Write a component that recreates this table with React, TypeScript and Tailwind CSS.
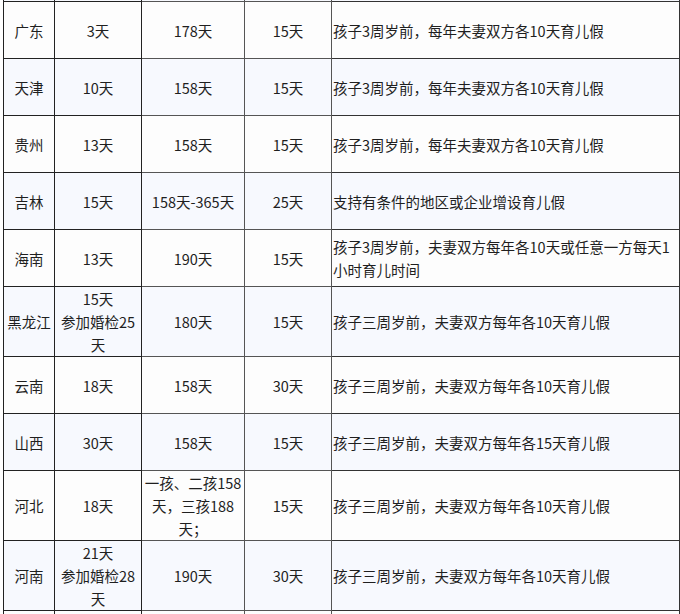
import React from "react";

type Row = { p: string; a: string[]; b: string[]; c: string; d: string[]; h?: string };

const rows: Row[] = [
  { p: "广东", a: ["3天"], b: ["178天"], c: "15天", d: ["孩子3周岁前，每年夫妻双方各10天育儿假"] },
  { p: "天津", a: ["10天"], b: ["158天"], c: "15天", d: ["孩子3周岁前，每年夫妻双方各10天育儿假"] },
  { p: "贵州", a: ["13天"], b: ["158天"], c: "15天", d: ["孩子3周岁前，每年夫妻双方各10天育儿假"] },
  { p: "吉林", a: ["15天"], b: ["158天-365天"], c: "25天", d: ["支持有条件的地区或企业增设育儿假"] },
  { p: "海南", a: ["13天"], b: ["190天"], c: "15天", d: ["孩子3周岁前，夫妻双方每年各10天或任意一方每天1", "小时育儿时间"] },
  { p: "黑龙江", a: ["15天", "参加婚检25", "天"], b: ["180天"], c: "15天", d: ["孩子三周岁前，夫妻双方每年各10天育儿假"] },
  { p: "云南", a: ["18天"], b: ["158天"], c: "30天", d: ["孩子三周岁前，夫妻双方每年各10天育儿假"] },
  { p: "山西", a: ["30天"], b: ["158天"], c: "15天", d: ["孩子三周岁前，夫妻双方每年各15天育儿假"] },
  { p: "河北", a: ["18天"], b: ["一孩、二孩158", "天，三孩188", "天；"], c: "15天", d: ["孩子三周岁前，夫妻双方每年各10天育儿假"] },
  { p: "河南", a: ["21天", "参加婚检28", "天"], b: ["190天"], c: "30天", d: ["孩子三周岁前，夫妻双方每年各10天育儿假"] },
];

const Lines = ({ l }: { l: string[] }) => (
  <>
    {l.map((t, i) => (
      <div key={i}>{t}</div>
    ))}
  </>
);

export default function App() {
  return (
    <div
      className="w-[680px] h-[614px] overflow-hidden bg-white text-[#1f1f1f]"
      style={{ fontFamily: '"Noto Sans CJK SC", "Noto Sans", sans-serif' }}
    >
      <table className="ml-[3px] -mt-[19px] w-[676px] table-fixed border-collapse text-[14.5px] leading-[23px]">
        <colgroup>
          <col className="w-[51px]" />
          <col className="w-[87px]" />
          <col className="w-[103px]" />
          <col className="w-[87px]" />
          <col className="w-[348px]" />
        </colgroup>
        <tbody>
          <tr className="h-[20px] bg-[#f7f9fe]">
            <td className="border border-[#222] p-0" />
            <td className="border border-[#222] p-0" />
            <td className="border border-[#555] p-0" />
            <td className="border border-[#555] p-0" />
            <td className="border border-[#333] p-0" />
          </tr>
          {rows.map((r, i) => (
            <tr key={r.p} className={i % 2 === 0 ? "h-[57px] bg-[#fdfdfd]" : "h-[57px] bg-[#f7f9fe]"}>
              <td className="border border-[#222] p-0 text-center align-middle">{r.p}</td>
              <td className="border border-[#222] px-[2px] py-0 text-center align-middle">
                <Lines l={r.a} />
              </td>
              <td className="border border-[#555] px-[2px] py-0 text-center align-middle">
                <Lines l={r.b} />
              </td>
              <td className="border border-[#555] p-0 text-center align-middle">{r.c}</td>
              <td className="border border-[#333] py-0 pl-[1px] pr-[4px] text-left align-middle">
                <Lines l={r.d} />
              </td>
            </tr>
          ))}
          <tr className="h-[40px] bg-[#fdfdfd]">
            <td className="border border-[#222] p-0" />
            <td className="border border-[#222] p-0" />
            <td className="border border-[#555] p-0" />
            <td className="border border-[#555] p-0" />
            <td className="border border-[#333] p-0" />
          </tr>
        </tbody>
      </table>
    </div>
  );
}
